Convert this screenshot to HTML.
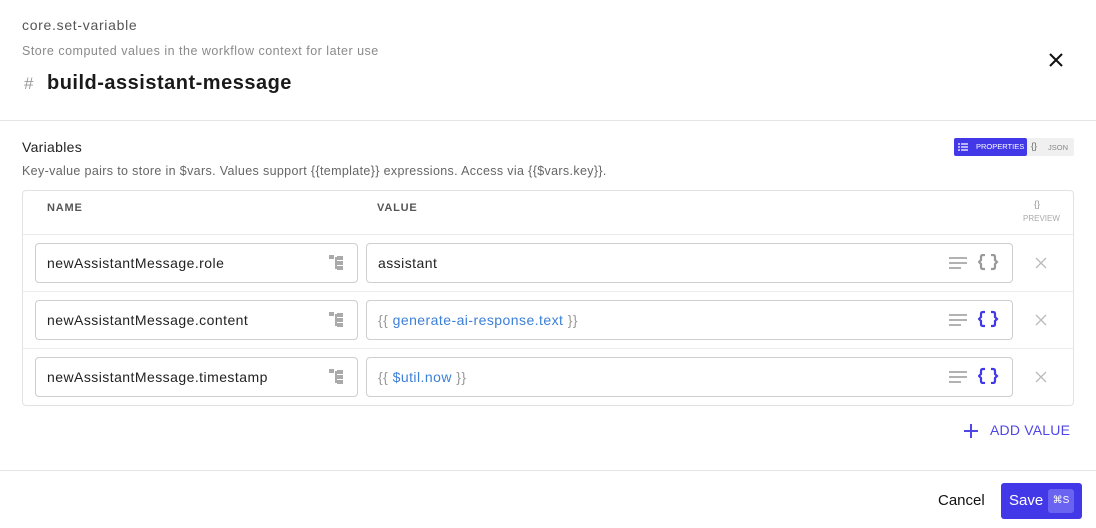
<!DOCTYPE html>
<html><head><style>
*{box-sizing:border-box;margin:0;padding:0}
body{width:1096px;height:528px;background:#fff;font-family:"Liberation Sans",sans-serif;position:relative;overflow:hidden;color:#222}
.a{position:absolute;white-space:nowrap}
.inp{position:absolute;height:40px;border:1px solid #cfcfcf;border-radius:4px;background:#fff;font-size:14px;line-height:38px;padding-left:11px;color:#222;letter-spacing:.45px}
.sep{position:absolute;left:23px;width:1050px;height:1px;background:#ececec}
.blue{color:#3b7fd8}
.gr{color:#999}
</style></head><body>
<div class="a" style="left:22px;top:17px;font-size:14px;color:#555;letter-spacing:.7px">core.set-variable</div>
<div class="a" style="left:22px;top:44px;font-size:12.5px;color:#8a8a8a;letter-spacing:.5px">Store computed values in the workflow context for later use</div>
<div class="a" style="left:24px;top:74px;font-size:17px;color:#999">#</div>
<div class="a" style="left:47px;top:72px;font-size:20px;font-weight:bold;color:#1a1a1a;letter-spacing:.5px">build-assistant-message</div>
<svg class="a" style="left:1048px;top:52px" width="16" height="16" viewBox="0 0 16 16"><path d="M2 2L14 14M14 2L2 14" stroke="#111" stroke-width="2"/></svg>
<div class="a" style="left:0;top:120px;width:1096px;height:1px;background:#e5e5e5"></div>
<div class="a" style="left:22px;top:139px;font-size:14px;color:#222;letter-spacing:.3px">Variables</div>
<div class="a" style="left:954px;top:138px;width:120px;height:18px;background:#f0f0f0;border-radius:2px"></div>
<div class="a" style="left:954px;top:138px;width:73px;height:18px;background:#4338e8;border-radius:2px;color:#fff;font-size:7.5px;line-height:18px;padding-left:22px">PROPERTIES</div>
<svg class="a" style="left:958px;top:143px" width="10" height="8"><path d="M0 1h2M3 1h7M0 4h2M3 4h7M0 7h2M3 7h7" stroke="#fff" stroke-width="1.2"/></svg>
<div class="a" style="left:1031px;top:141px;font-size:9px;color:#666">{}</div>
<div class="a" style="left:1048px;top:143px;font-size:7.5px;color:#888">JSON</div>
<div class="a" style="left:22px;top:164px;font-size:12.5px;color:#666;letter-spacing:.35px">Key-value pairs to store in $vars. Values support {{template}} expressions. Access via {{$vars.key}}.</div>
<div class="a" style="left:22px;top:190px;width:1052px;height:216px;border:1px solid #e2e2e2;border-radius:4px"></div>
<div class="a" style="left:47px;top:202px;font-size:11px;font-weight:bold;color:#555;letter-spacing:.8px">NAME</div>
<div class="a" style="left:377px;top:202px;font-size:11px;font-weight:bold;color:#555;letter-spacing:.8px">VALUE</div>
<div class="a" style="left:1034px;top:199px;font-size:9px;color:#999">{}</div>
<div class="a" style="left:1023px;top:214px;font-size:8px;color:#aaa">PREVIEW</div>
<div class="sep" style="top:234px"></div>
<div class="sep" style="top:291px"></div>
<div class="sep" style="top:348px"></div>

<div class="inp" style="left:35px;top:243px;width:323px">newAssistantMessage.role</div>
<div class="inp" style="left:366px;top:243px;width:647px">assistant</div>
<div class="inp" style="left:35px;top:300px;width:323px">newAssistantMessage.content</div>
<div class="inp" style="left:366px;top:300px;width:647px"><span class="gr">{{ </span><span class="blue">generate-ai-response.text</span><span class="gr"> }}</span></div>
<div class="inp" style="left:35px;top:357px;width:323px">newAssistantMessage.timestamp</div>
<div class="inp" style="left:366px;top:357px;width:647px"><span class="gr">{{ </span><span class="blue">$util.now</span><span class="gr"> }}</span></div>

<svg class="a" style="left:329px;top:255px" width="16" height="130"><g fill="#aaa"><rect x="0" y="0" width="5" height="4"/><rect x="8" y="1" width="6" height="4"/><rect x="8" y="6" width="6" height="4"/><rect x="8" y="11" width="6" height="4"/><rect x="6" y="2" width="2" height="12"/></g><g fill="#aaa" transform="translate(0,57)"><rect x="0" y="0" width="5" height="4"/><rect x="8" y="1" width="6" height="4"/><rect x="8" y="6" width="6" height="4"/><rect x="8" y="11" width="6" height="4"/><rect x="6" y="2" width="2" height="12"/></g><g fill="#aaa" transform="translate(0,114)"><rect x="0" y="0" width="5" height="4"/><rect x="8" y="1" width="6" height="4"/><rect x="8" y="6" width="6" height="4"/><rect x="8" y="11" width="6" height="4"/><rect x="6" y="2" width="2" height="12"/></g></svg>
<svg class="a" style="left:948px;top:256px" width="22" height="130"><g stroke="#999" stroke-width="1.6"><path d="M1 2h18M1 7h18M1 12h12"/><path d="M1 59h18M1 64h18M1 69h12"/><path d="M1 116h18M1 121h18M1 126h12"/></g></svg>
<svg class="a" style="left:978px;top:254px" width="22" height="130" fill="none" stroke-width="2.2"><path d="M7 1H5Q3 1 3 3V6L1 8L3 10V13Q3 15 5 15H7M13 1H15Q17 1 17 3V6L19 8L17 10V13Q17 15 15 15H13" stroke="#999"/><path transform="translate(0,57)" d="M7 1H5Q3 1 3 3V6L1 8L3 10V13Q3 15 5 15H7M13 1H15Q17 1 17 3V6L19 8L17 10V13Q17 15 15 15H13" stroke="#4338e8"/><path transform="translate(0,114)" d="M7 1H5Q3 1 3 3V6L1 8L3 10V13Q3 15 5 15H7M13 1H15Q17 1 17 3V6L19 8L17 10V13Q17 15 15 15H13" stroke="#4338e8"/></svg>
<svg class="a" style="left:1035px;top:257px" width="12" height="126" stroke="#bbb" stroke-width="1.3"><path d="M1 1L11 11M11 1L1 11"/><path d="M1 58L11 68M11 58L1 68"/><path d="M1 115L11 125M11 115L1 125"/></svg>

<svg class="a" style="left:963px;top:423px" width="16" height="16"><path d="M8 1V15M1 8H15" stroke="#4f46e5" stroke-width="2"/></svg>
<div class="a" style="left:990px;top:422px;font-size:14px;color:#4f46e5;letter-spacing:.2px">ADD VALUE</div>

<div class="a" style="left:0;top:470px;width:1096px;height:1px;background:#e5e5e5"></div>
<div class="a" style="left:938px;top:492px;font-size:15px;color:#111">Cancel</div>
<div class="a" style="left:1001px;top:483px;width:81px;height:36px;background:#4338e8;border-radius:3px"></div>
<div class="a" style="left:1009px;top:492px;font-size:15px;color:#fff">Save</div>
<div class="a" style="left:1048px;top:489px;width:26px;height:24px;background:#6a62f0;border-radius:3px;color:#fff;font-size:10px;line-height:24px;text-align:center">⌘S</div>
</body></html>
